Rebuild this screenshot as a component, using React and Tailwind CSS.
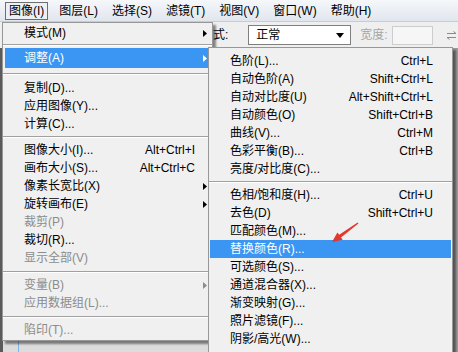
import React from "react";

// left "图像" menu — h is the row class, sep rows carry their own height class
const imageMenu = [
  { label: "模式(M)", arrow: true, h: "h-[18px]" },
  { sep: "h-[6px]" },
  { label: "调整(A)", arrow: true, active: true, h: "h-[20px]" },
  { sep: "h-[11px]" },
  { label: "复制(D)...", h: "h-[18px]" },
  { label: "应用图像(Y)...", h: "h-[18px]" },
  { label: "计算(C)...", h: "h-[18px]" },
  { sep: "h-[8px]" },
  { label: "图像大小(I)...", key: "Alt+Ctrl+I", h: "h-[18px]" },
  { label: "画布大小(S)...", key: "Alt+Ctrl+C", h: "h-[18px]" },
  { label: "像素长宽比(X)", arrow: true, h: "h-[18px]" },
  { label: "旋转画布(E)", arrow: true, h: "h-[18px]" },
  { label: "裁剪(P)", disabled: true, h: "h-[18px]" },
  { label: "裁切(R)...", h: "h-[18px]" },
  { label: "显示全部(V)", disabled: true, h: "h-[18px]" },
  { sep: "h-[9px]" },
  { label: "变量(B)", arrow: true, disabled: true, h: "h-[18px]" },
  { label: "应用数据组(L)...", disabled: true, h: "h-[18px]" },
  { sep: "h-[9px]" },
  { label: "陷印(T)...", disabled: true, h: "h-[18px]" },
];

const adjustMenu = [
  { label: "色阶(L)...", key: "Ctrl+L" },
  { label: "自动色阶(A)", key: "Shift+Ctrl+L" },
  { label: "自动对比度(U)", key: "Alt+Shift+Ctrl+L" },
  { label: "自动颜色(O)", key: "Shift+Ctrl+B" },
  { label: "曲线(V)...", key: "Ctrl+M" },
  { label: "色彩平衡(B)...", key: "Ctrl+B" },
  { label: "亮度/对比度(C)..." },
  { sep: true },
  { label: "色相/饱和度(H)...", key: "Ctrl+U" },
  { label: "去色(D)", key: "Shift+Ctrl+U" },
  { label: "匹配颜色(M)..." },
  { label: "替换颜色(R)...", active: true },
  { label: "可选颜色(S)..." },
  { label: "通道混合器(X)..." },
  { label: "渐变映射(G)..." },
  { label: "照片滤镜(F)..." },
  { label: "阴影/高光(W)..." },
];

const menuBar = ["图像(I)", "图层(L)", "选择(S)", "滤镜(T)", "视图(V)", "窗口(W)", "帮助(H)"];

function Arrow({ white, gray }) {
  const fill = white ? "#ffffff" : gray ? "#8c8c8c" : "#000000";
  return (
    <svg width="4" height="7" viewBox="0 0 4 7">
      <path d="M0 0L4 3.5L0 7z" fill={fill} />
    </svg>
  );
}

function Separator({ h }) {
  return (
    <div className={`flex flex-col justify-center ${h}`}>
      <div className="h-px bg-[#a0a0a0]" />
      <div className="h-px bg-white" />
    </div>
  );
}

export default function App() {
  return (
    <div className="relative flex h-[352px] w-[458px] flex-col overflow-hidden bg-[#e4e4e4] font-['Liberation_Sans','Noto_Sans_CJK_SC',sans-serif] text-[12px] text-black">
      {/* menu bar */}
      <div className="flex h-[22px] items-center gap-[2px] border-b border-[#c5ccd8] bg-gradient-to-b from-[#f5f7fa] to-[#e1e6ee] pl-[5px]">
        {menuBar.map((m, i) => (
          <div
            key={m}
            className={
              i === 0
                ? "mr-[3px] flex h-[18px] items-center border border-[#6e6e6e] bg-[#eceff4] px-[3px]"
                : "flex h-[18px] items-center px-[6px]"
            }
          >
            {m}
          </div>
        ))}
      </div>

      {/* options bar */}
      <div className="flex h-[26px] items-center bg-[#efefef] pl-[213px]">
        <span>式:</span>
        <div className="ml-[20px] flex h-[20px] w-[103px] items-center justify-between border border-[#7f7f7f] bg-white pl-[7px] pr-[6px]">
          <span>正常</span>
          <svg width="8" height="5" viewBox="0 0 8 5">
            <path d="M0 0H8L4 5z" fill="#000" />
          </svg>
        </div>
        <span className="ml-[9px] text-[#a6a6a6]">宽度:</span>
        <div className="ml-[4px] h-[19px] w-[41px] border border-[#cdcdcd] bg-[#f6f6f6]" />
        <svg className="ml-[13px]" width="11" height="9" viewBox="0 0 11 9">
          <path d="M1 2.5H10M7.5 0.5L10 2.5M10 6.5H1M3.5 8.5L1 6.5" stroke="#8a8a8a" strokeWidth="1" fill="none" />
        </svg>
      </div>

      {/* workspace */}
      <div className="flex flex-1">
        <div className="w-[3px] bg-[#5a5a5a]" />
        <div className="relative flex-1 bg-[#dcdcdc]">
          <div className="absolute bottom-0 left-[15px] top-0 w-px bg-[#7fb2e5]" />
        </div>
        <div className="w-[6px] bg-[#9c9c9c]" />
      </div>

      {/* 图像 menu */}
      <div className="absolute left-[2px] top-[22px] w-[211px] border border-[#979797] bg-[#f0f0f0] py-[1px] shadow-[3px_3px_2px_rgba(0,0,0,0.45)]">
        {imageMenu.map((it, i) =>
          it.sep ? (
            <Separator key={i} h={it.sep} />
          ) : (
            <div
              key={i}
              className={`mx-[2px] flex items-center ${it.h} ${
                it.active ? "bg-[#3a96f2] text-white" : it.disabled ? "text-[#8c8c8c]" : ""
              }`}
            >
              <span className="flex-1 pl-[19px]">{it.label}</span>
              {it.key && <span>{it.key}</span>}
              <span className="flex w-[15px] justify-end pr-[3px]">
                {it.arrow && <Arrow white={it.active} gray={it.disabled} />}
              </span>
            </div>
          )
        )}
      </div>

      {/* 调整 submenu */}
      <div className="absolute left-[208px] top-[47px] w-[245px] border border-[#979797] bg-[#f0f0f0] pb-[20px] pt-[4px] shadow-[3px_3px_2px_rgba(0,0,0,0.45)]">
        {adjustMenu.map((it, i) =>
          it.sep ? (
            <Separator key={i} h="h-[8px]" />
          ) : (
            <div
              key={i}
              className={`mx-[1px] flex h-[18px] items-center pl-[20px] pr-[18px] ${
                it.active ? "bg-[#3a96f2] text-white" : ""
              }`}
            >
              <span className="flex-1">{it.label}</span>
              {it.key && <span>{it.key}</span>}
            </div>
          )
        )}
      </div>

      {/* red pointer arrow */}
      <svg className="absolute left-[328px] top-[218px]" width="34" height="28" viewBox="0 0 34 28">
        <polygon
          points="4,24 14.7,21.7 13,19.4 30.4,5.5 29.6,4.5 11.2,16.8 9.4,14.5"
          fill="#e0392f"
        />
      </svg>
    </div>
  );
}
